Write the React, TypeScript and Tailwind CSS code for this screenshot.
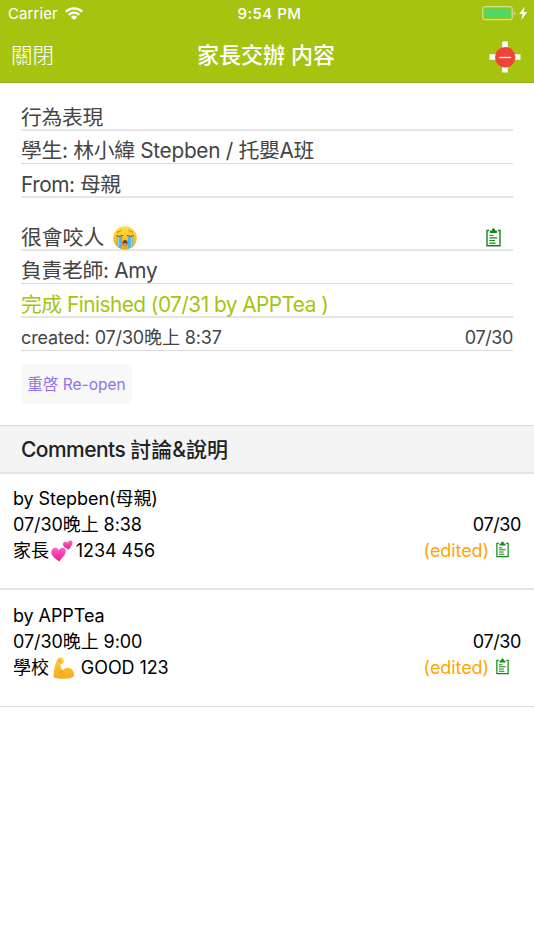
import React from "react";

interface Comment {
  id: number;
  author: React.ReactNode;
  time: string;
  date: string;
  body: React.ReactNode;
  className: string;
}

const ClipboardIcon = ({ className }: { className: string }) => (
  <svg viewBox="0 0 15 19" fill="none" className={className}>
    <path d="M3.200 2.500H1v15.300h13V2.500h-2.200" stroke="currentColor" strokeWidth="1.400" />
    <path
      d="M4 5V3.600c0-.6.500-1 1.100-1h.8C6 1.100 6.600.300 7.500.300s1.500.8 1.600 2.300h.8c.6 0 1.100.4 1.100 1V5z"
      fill="currentColor"
    />
    <path d="M3.400 7.500h4M3.400 9.900h7.800M3.400 12.500h5.600M3.400 15.100h6.200" stroke="currentColor" strokeWidth="1.200" />
  </svg>
);

const CryingFace = () => (
  <svg viewBox="0 0 24 24" className="w-6 h-6">
    <defs>
      <linearGradient id="cryFace" x1="0" y1="0" x2="0" y2="1">
        <stop offset="0" stopColor="#ffdf3f" />
        <stop offset="1" stopColor="#f5a51c" />
      </linearGradient>
    </defs>
    <circle cx="12" cy="12" r="11.800" fill="url(#cryFace)" />
    <path d="M4.500 6.200Q6.500 6 8.200 4.400M19.500 6.200Q17.500 6 15.800 4.400" stroke="#a56a10" strokeWidth=".8" fill="none" strokeLinecap="round" />
    <path d="M4.300 10.500h4.700v12.300q-2.600-.8-4.700-2.800zM15 10.500h4.700V20q-2.200 2-4.700 2.800z" fill="#4fb7ed" />
    <path d="M5.500 11v9.500M18.500 11v9.500" stroke="#8bd8fa" strokeWidth="1.200" />
    <path d="M3.500 9.900q3 1.400 6.300-.3M20.500 9.900q-3 1.400-6.300-.3" stroke="#80500f" strokeWidth="1" fill="none" strokeLinecap="round" />
    <ellipse cx="12" cy="17" rx="2.500" ry="2.900" fill="#7a4212" />
    <path d="M10 18q2-1.500 4 0-.6 1.700-2 1.700t-2-1.700z" fill="#d9a59b" />
  </svg>
);

const TwoHearts = () => (
  <svg viewBox="0 0 22 22" className="w-[22px] h-[22px]">
    <defs>
      <linearGradient id="heart" x1="0" y1="0" x2="0" y2="1">
        <stop offset="0" stopColor="#ff64c5" />
        <stop offset="1" stopColor="#ed1595" />
      </linearGradient>
    </defs>
    <path d="M8.200 21.500C5 19 .3 16.300.3 12.200c0-4.600 5.500-6 7.500-2 1.700-3.800 6.700-3.200 6.900.8.200 4.300-4.400 7-6.500 10.500z" fill="url(#heart)" />
    <path d="M18 9.700c-1.800-1.200-5.700-2.200-6-5.200-.2-2.900 3.100-3.700 4.400-1.300C17-.1 20.700-.3 21.400 2.300c.6 2.700-2.500 4.700-3.400 7.400z" fill="url(#heart)" />
  </svg>
);

const Biceps = () => (
  <svg viewBox="0 0 22 22" className="w-[22px] h-[22px]">
    <defs>
      <linearGradient id="arm" x1="0" y1="0" x2="0" y2="1">
        <stop offset="0" stopColor="#ffd23c" />
        <stop offset="1" stopColor="#f8a821" />
      </linearGradient>
    </defs>
    <path
      d="M4.500 1.800C5.500.4 8.500.1 9.700 1c1.300 1 1.500 4.200.3 5.300-.9.800-2.700.4-2.700 1.500 0 1.800 1.700 3.600 2.200 6 1.700-3.200 5.500-4 8.500-2 2.500 1.600 3.600 4.600 3 6.800-1 2.600-5.500 3.100-9.500 3.100-4.400 0-9.300.2-10.600-1.700C-.2 17.500 1.800 8 4.500 1.800z"
      fill="url(#arm)"
    />
    <path d="M5.500 3.800q2-.8 2.200 1.200M9.500 13.800q-.8 1.500-2.500 1.800" stroke="#d88613" strokeWidth=".9" fill="none" strokeLinecap="round" />
  </svg>
);

const StatusBar = () => (
  <div className="h-7 pl-2 pr-1.5 grid grid-cols-[1fr_auto_1fr] items-center text-white text-[15px]">
    <div className="flex items-center gap-[7px]">
      <span className="tracking-[0.1px]">Carrier</span>
      <svg viewBox="0 0 18 13" className="w-[18px] h-[13px] -mt-0.5" fill="none" stroke="white" strokeWidth="2.300">
        <path d="M.8 4.700a11.800 11.800 0 0 1 16.400 0M3.800 7.800a7.500 7.500 0 0 1 10.400 0" />
        <path d="M5.900 9.900a4.500 4.500 0 0 1 6.200 0L9 13z" fill="white" stroke="none" />
      </svg>
    </div>
    <span className="font-medium tracking-[0.5px] ml-[3px]">9:54 PM</span>
    <div className="flex items-center justify-end">
      <svg viewBox="0 0 46 16" className="w-[46px] h-4 -mt-0.5">
        <rect x=".700" y="1.700" width="29.600" height="13" rx="2.500" fill="none" stroke="#d3de8d" strokeWidth="1.200" />
        <rect x="2.500" y="3.500" width="26" height="9.500" rx="1" fill="#4cd964" />
        <path d="M32 6v4.500q1.500-.6 1.500-2.200T32 6z" fill="#d3de8d" />
        <path d="M42.800 1.500L37.200 9h3.400l-1.300 6L45.200 7h-3.500z" fill="white" />
      </svg>
    </div>
  </div>
);

const Header = () => (
  <header className="h-[83px] bg-[#a6c40f] border-b border-[#96ac1d] text-white">
    <StatusBar />
    <div className="h-[54px] grid grid-cols-[1fr_auto_1fr] items-center pl-[11px] pr-[13px]">
      <button className="justify-self-start text-[21.500px] font-light">關閉</button>
      <h1 className="text-[22px] font-medium">家長交辦 内容</h1>
      <button className="justify-self-end mt-1">
        <svg viewBox="0 0 32 32" className="w-8 h-8">
          <path d="M13.200.5h5.600v31h-5.600zM.5 13.200h31v5.600H.5z" fill="white" />
          <circle cx="16.200" cy="16.200" r="10.200" fill="#f04438" />
          <path d="M10.200 16.500h12" stroke="white" strokeWidth="1.300" />
        </svg>
      </button>
    </div>
  </header>
);

interface RowProps {
  className: string;
  children: React.ReactNode;
}

const Row: React.FC<RowProps> = ({ className, children }) => (
  <div className={`flex items-center justify-between whitespace-nowrap ${className}`}>{children}</div>
);

const comments: Comment[] = [
  {
    id: 1,
    author: "by Stepben(母親)",
    time: "07/30晚上 8:38",
    date: "07/30",
    className: "h-[116px] pt-3 border-b-2 border-[#e5e5e5]",
    body: (
      <>
        <span>家長</span>
        <span className="ml-[2px] mr-[3px]"><TwoHearts /></span>
        <span>1234 456</span>
      </>
    ),
  },
  {
    id: 2,
    author: "by APPTea",
    time: "07/30晚上 9:00",
    date: "07/30",
    className: "h-[117px] pt-[13px] border-b border-[#dadada]",
    body: (
      <>
        <span>學校</span>
        <span className="ml-[4px] mr-[6px]"><Biceps /></span>
        <span>GOOD 123</span>
      </>
    ),
  },
];

const CommentItem = ({ comment }: { comment: Comment }) => (
  <li
    className={`px-[13px] text-[18px] leading-[26px] tracking-[-0.08px] text-black whitespace-nowrap ${comment.className}`}
  >
    <div>{comment.author}</div>
    <div className="flex justify-between">
      <span>{comment.time}</span>
      <span className="tracking-[-0.4px]">{comment.date}</span>
    </div>
    <div className="flex justify-between">
      <div className="flex items-center">{comment.body}</div>
      <div className="flex items-center pr-3 gap-[7px]">
        <span className="text-[#ffa500]">(edited)</span>
        <ClipboardIcon className="w-[13px] h-[17px] mb-[3px] text-[#118a11]" />
      </div>
    </div>
  </li>
);

const App: React.FC = () => {
  return (
    <div className="min-h-[950px] bg-white font-['Inter','Noto_Sans_CJK_TC',sans-serif]">
      <Header />

      <section className="px-[21px] pt-[22px] h-[342px] text-[20.800px] leading-6 tracking-[-0.3px] text-[#444]">
        <Row className="h-[26px] pt-0.5 border-b-2 border-[#e5e5e5]">行為表現</Row>
        <Row className="h-[33px] pt-2 border-b border-[#dadada]">學生: 林小緯 Stepben / 托嬰A班</Row>
        <Row className="h-[34px] pt-[9px] border-b-2 border-[#e5e5e5] tracking-[-0.450px]">From: 母親</Row>

        <Row className="h-[53px] pt-[28px] border-b-2 border-[#e5e5e5]">
          <span className="flex items-center gap-[9px]">
            <span className="tracking-normal">很會咬人</span> <CryingFace />
          </span>
          <ClipboardIcon className="w-[15px] h-[19px] mr-[12px] mb-px text-[#118a11]" />
        </Row>
        <Row className="h-[33px] pt-2 border-b border-[#dadada]">負責老師: Amy</Row>
        <Row className="h-[34px] pt-[9px] border-b-2 border-[#e5e5e5] text-[#a6c40f] tracking-[-0.520px]">
          完成 Finished (07/31 by APPTea )
        </Row>
        <Row className="h-[33px] pt-[7px] border-b border-[#dadada] text-[18px]">
          <span className="tracking-[-0.150px]">created: 07/30晚上 8:37</span>
          <span className="tracking-[-0.4px]">07/30</span>
        </Row>

        <button className="mt-[13px] w-[111px] h-10 pt-px rounded-md bg-[#f8f8f8] text-[15.500px] tracking-normal text-[#9370eb] whitespace-nowrap">
          重啓 Re-open
        </button>
      </section>

      <h2 className="h-[49px] pl-[21px] pt-px flex items-center whitespace-pre bg-[#f4f4f4] border-t border-b-2 border-t-[#dadada] border-b-[#e5e5e5] text-[21px] font-medium text-[#222]">
        <span className="tracking-[-0.550px]">Comments </span>
        <span>討論&說明</span>
      </h2>

      <ul>
        {comments.map((comment) => (
          <CommentItem key={comment.id} comment={comment} />
        ))}
      </ul>
    </div>
  );
};

export default App;
